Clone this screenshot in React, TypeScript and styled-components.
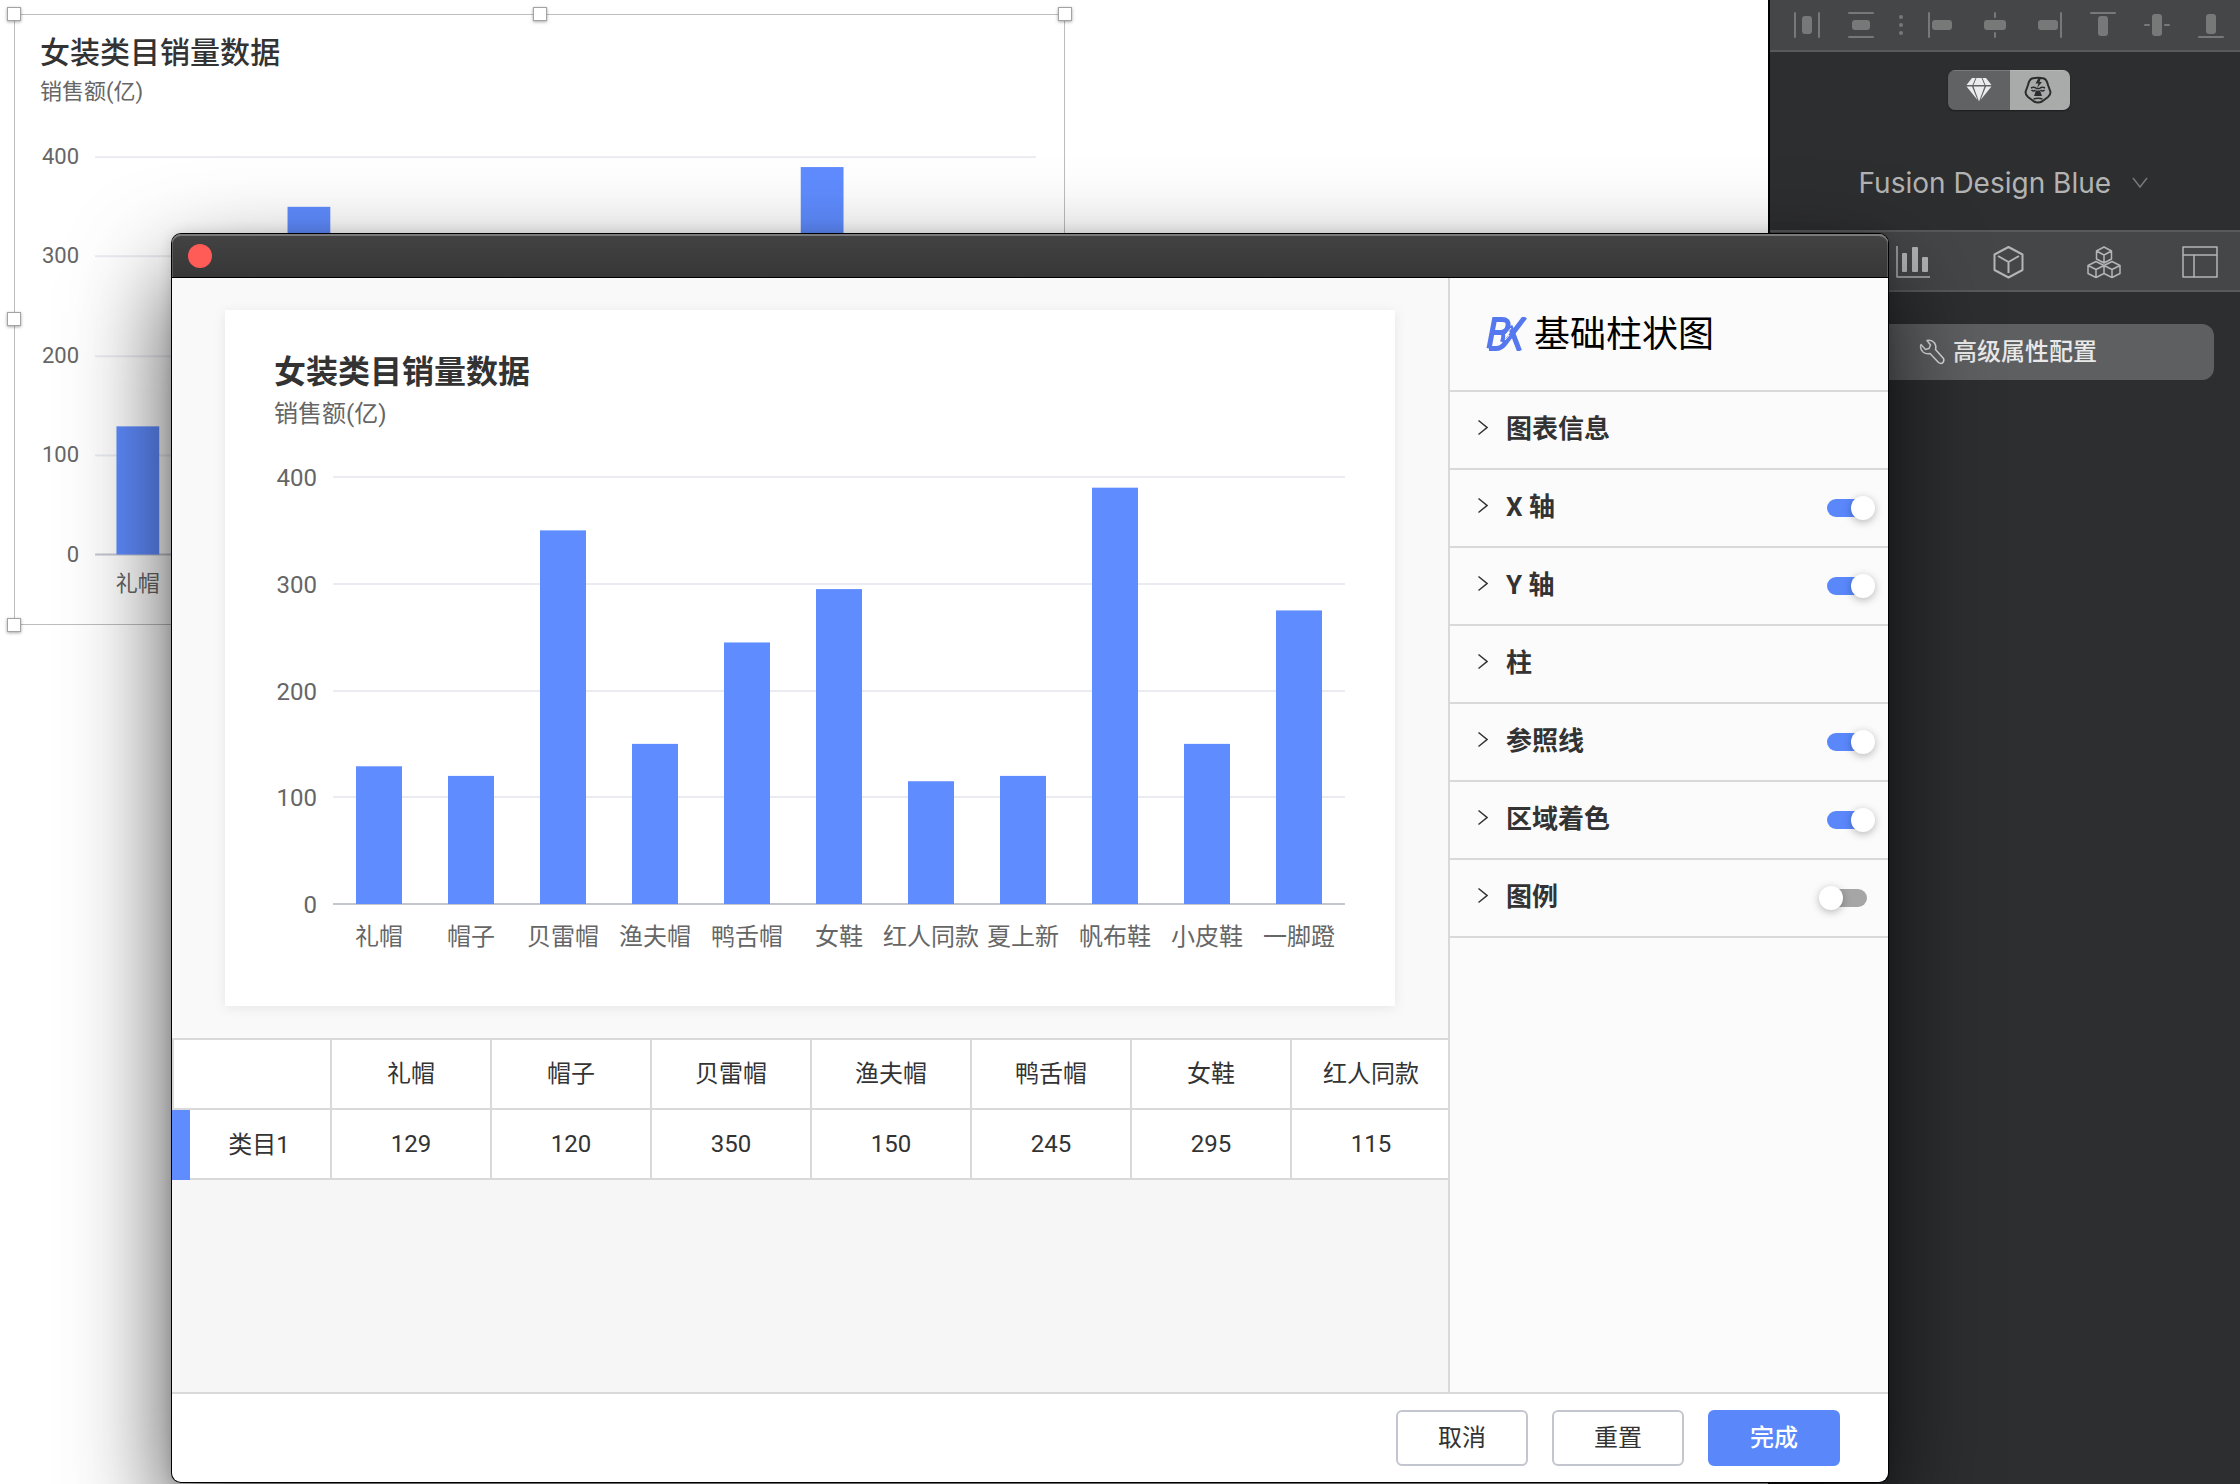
import React from "react";
import styled, { createGlobalStyle } from "styled-components";

const sans = `Roboto, "Noto Sans CJK SC", "Noto Sans", sans-serif`;

const color = {
  brand: "#5a88fb",
  bar: "#5f8cff",
  line: "#d9d9d9",
  text: "#333333",
  muted: "#666666",
  panel: "#2d2e30",
  strip: "#454648",
  stripLine: "#58595b",
};

const GlobalStyle = createGlobalStyle`
  *, *::before, *::after { box-sizing: border-box; }
  body { margin: 0; background: #ffffff; font-family: ${sans}; color: ${color.text}; }
  button, select, input { font: inherit; color: inherit; margin: 0; }
`;

/* ---------- data ---------- */

const items = [
  { name: "礼帽", value: 129 },
  { name: "帽子", value: 120 },
  { name: "贝雷帽", value: 350 },
  { name: "渔夫帽", value: 150 },
  { name: "鸭舌帽", value: 245 },
  { name: "女鞋", value: 295 },
  { name: "红人同款", value: 115 },
  { name: "夏上新", value: 120 },
  { name: "帆布鞋", value: 390 },
  { name: "小皮鞋", value: 150 },
  { name: "一脚蹬", value: 275 },
];

const sections: { title: string; enabled?: boolean }[] = [
  { title: "图表信息" },
  { title: "X 轴", enabled: true },
  { title: "Y 轴", enabled: true },
  { title: "柱" },
  { title: "参照线", enabled: true },
  { title: "区域着色", enabled: true },
  { title: "图例", enabled: false },
];

/* ---------- chart ---------- */

interface ChartLayout {
  width: number;
  height: number;
  titleX: number;
  titleY: number;
  subtitleY: number;
  titleSize: number;
  titleWeight: number;
  labelSize: number;
  left: number;
  right: number;
  top: number;
  base: number;
  tickDrop: number;
  labelDrop: number;
  /* how many category labels are drawn, counted from the left */
  labelCount: number;
}

const canvasChart: ChartLayout = {
  width: 1050,
  height: 610,
  titleX: 26,
  titleY: 49,
  subtitleY: 85,
  titleSize: 30,
  titleWeight: 500,
  labelSize: 22,
  left: 81,
  right: 1021,
  top: 143,
  base: 540,
  tickDrop: 7,
  labelDrop: 36,
  labelCount: 1,
};

const previewChart: ChartLayout = {
  width: 1170,
  height: 696,
  titleX: 49,
  titleY: 73,
  subtitleY: 112,
  titleSize: 32,
  titleWeight: 700,
  labelSize: 24,
  left: 108,
  right: 1120,
  top: 167,
  base: 594,
  tickDrop: 9,
  labelDrop: 41,
  labelCount: items.length,
};

const ChartSvg = styled.svg`
  display: block;
  width: 100%;
  height: auto;
  font-family: ${sans};
`;

function BarChart({ layout: l }: { layout: ChartLayout }) {
  const pitch = (l.right - l.left) / items.length;
  const y = (v: number) => l.base - ((l.base - l.top) * v) / 400;
  return (
    <ChartSvg viewBox={`0 0 ${l.width} ${l.height}`} role="img" aria-label="女装类目销量数据">
      <text x={l.titleX} y={l.titleY} fontSize={l.titleSize} fontWeight={l.titleWeight} fill={color.text}>
        女装类目销量数据
      </text>
      <text x={l.titleX} y={l.subtitleY} fontSize={l.labelSize} fill={color.muted}>
        销售额(亿)
      </text>
      {[400, 300, 200, 100, 0].map((tick) => (
        <g key={tick}>
          <rect
            x={l.left}
            y={Math.round(y(tick)) - 1}
            width={l.right - l.left}
            height={2}
            fill={tick === 0 ? "#c4c6cf" : "#ebecf1"}
          />
          <text
            x={l.left - 16}
            y={y(tick) + l.tickDrop}
            textAnchor="end"
            fontSize={l.labelSize}
            fill={color.muted}
          >
            {tick}
          </text>
        </g>
      ))}
      {items.map((item, i) => (
        <g key={item.name}>
          <rect
            x={l.left + pitch * (i + 0.25)}
            y={y(item.value)}
            width={pitch / 2}
            height={l.base - y(item.value)}
            fill={color.bar}
          />
          {i < l.labelCount && (
            <text
              x={l.left + pitch * (i + 0.5)}
              y={l.base + l.labelDrop}
              textAnchor="middle"
              fontSize={l.labelSize}
              fill={color.muted}
            >
              {item.name}
            </text>
          )}
        </g>
      ))}
    </ChartSvg>
  );
}

/* ---------- workspace ---------- */

const Screen = styled.div`
  position: relative;
  display: grid;
  grid-template-columns: minmax(0, 1fr) 472px;
  height: 100vh;
  overflow: hidden;
`;

const Canvas = styled.main`
  padding: 14px;
  background: #ffffff;
`;

const Artboard = styled.div`
  position: relative;
  width: 1051px;
  outline: 1px solid #bdbdbd;
  outline-offset: -1px;
`;

const Handle = styled.span<{ $x: number; $y: number }>`
  position: absolute;
  left: ${(p) => p.$x}%;
  top: ${(p) => p.$y}%;
  width: 14px;
  height: 14px;
  margin: -7px;
  background: #ffffff;
  border: 1px solid #a3a3a3;
  box-shadow: 0 1px 3px rgba(0, 0, 0, 0.35);
`;

const handles = [
  [0, 0],
  [50, 0],
  [100, 0],
  [0, 50],
  [100, 50],
  [0, 100],
  [50, 100],
  [100, 100],
];

/* ---------- inspector ---------- */

const Inspector = styled.aside`
  display: flex;
  flex-direction: column;
  border-left: 2px solid #000000;
  background: ${color.panel};
`;

const Strip = styled.div`
  display: flex;
  align-items: center;
  background: ${color.strip};
`;

const AlignBar = styled(Strip)`
  height: 52px;
  padding-left: 24px;
  border-bottom: 2px solid ${color.stripLine};
`;

const AlignGroup = styled.div`
  display: flex;
  gap: 28px;
`;

const IconButton = styled.button<{ $size: number }>`
  display: flex;
  align-items: center;
  justify-content: center;
  width: ${(p) => p.$size}px;
  height: ${(p) => p.$size}px;
  padding: 0;
  border: 0;
  background: none;

  svg {
    display: block;
    width: 100%;
    height: 100%;
  }
`;

const Dots = styled.svg`
  width: 4px;
  height: 26px;
  margin: 0 25px;
`;

type Shape = [number, number, number, number];
interface AlignIcon {
  label: string;
  block: Shape;
  lines: Shape[];
}

const distribute: AlignIcon[] = [
  { label: "水平分布", block: [8, 4, 10, 18], lines: [[0, 0, 2, 26], [24, 0, 2, 26]] },
  { label: "垂直分布", block: [4, 8, 18, 10], lines: [[0, 0, 26, 2], [0, 24, 26, 2]] },
];

const align: AlignIcon[] = [
  { label: "左对齐", block: [4, 8, 20, 10], lines: [[0, 0, 2, 26]] },
  { label: "水平居中", block: [2, 8, 22, 10], lines: [[12, 0, 2, 6], [12, 20, 2, 6]] },
  { label: "右对齐", block: [2, 8, 20, 10], lines: [[24, 0, 2, 26]] },
  { label: "顶对齐", block: [8, 4, 10, 20], lines: [[0, 0, 26, 2]] },
  { label: "垂直居中", block: [8, 2, 10, 22], lines: [[0, 12, 6, 2], [20, 12, 6, 2]] },
  { label: "底对齐", block: [8, 2, 10, 20], lines: [[0, 24, 26, 2]] },
];

function AlignButton({ icon }: { icon: AlignIcon }) {
  const [x, y, w, h] = icon.block;
  return (
    <IconButton $size={26} type="button" aria-label={icon.label}>
      <svg viewBox="0 0 26 26" fill="#777978">
        <rect x={x} y={y} width={w} height={h} rx={3} />
        {icon.lines.map(([lx, ly, lw, lh], i) => (
          <rect key={i} x={lx} y={ly} width={lw} height={lh} rx={1} />
        ))}
      </svg>
    </IconButton>
  );
}

const LibraryPanel = styled.div`
  display: flex;
  flex-direction: column;
  align-items: center;
  gap: 53px;
  height: 178px;
  padding-top: 18px;
`;

const Segments = styled.div`
  display: flex;
  height: 40px;
  margin-left: 8px;
  border-radius: 7px;
  overflow: hidden;
  box-shadow: 0 1px 2px rgba(0, 0, 0, 0.4);
`;

const Segment = styled.button<{ $active?: boolean }>`
  display: flex;
  align-items: center;
  justify-content: center;
  width: ${(p) => (p.$active ? 60 : 62)}px;
  padding: ${(p) => (p.$active ? "0 4px 0 0" : "0")};
  border: 0;
  background: ${(p) => (p.$active ? "#a9abaa" : "#616264")};
  box-shadow: inset 0 1px 0 rgba(255, 255, 255, 0.16);

  svg {
    display: block;
    width: 28px;
    height: 28px;
  }
`;

const LibraryField = styled.label`
  display: flex;
  align-items: center;
  gap: 20px;
  margin-right: 4px;

  svg {
    width: 16px;
    height: 12px;
  }
`;

const LibrarySelect = styled.select`
  appearance: none;
  height: 40px;
  padding: 0;
  border: 0;
  background: none;
  color: #b2b3b2;
  font-family: Inter, "Liberation Sans", sans-serif;
  font-size: 28px;
`;

const TabBar = styled(Strip)`
  gap: 60px;
  height: 62px;
  padding: 2px 0 0 28px;
  border-top: 2px solid ${color.stripLine};
  border-bottom: 2px solid ${color.stripLine};
`;

const ConfigButton = styled.button`
  display: flex;
  align-items: center;
  justify-content: center;
  gap: 8px;
  height: 56px;
  margin: 32px 26px 0 28px;
  padding: 0 0 0 4px;
  border: 0;
  border-radius: 12px;
  background: #5e5f61;
  color: #e9e9e9;
  font-size: 24px;
  font-weight: 500;
  line-height: 36px;

  svg {
    width: 26px;
    height: 26px;
  }
`;

const GemIcon = () => (
  <svg viewBox="0 0 28 28" fill="#ececec">
    <path d="M7 2h3.5l-3 7H1.500z" />
    <path d="M11.500 2h5l3 7h-11z" />
    <path d="M17.500 2H21l5.500 7h-6z" />
    <path d="M1.500 10.500h5.500L12.500 24z" />
    <path d="M8.500 10.500h11L14 25.500z" />
    <path d="M21 10.500h5.500L15.500 24z" />
  </svg>
);

const GorillaIcon = () => (
  <svg viewBox="0 0 28 28" fill="none" stroke="#2b2c2d" strokeWidth="2" strokeLinejoin="round">
    <path d="M8 2.500Q14 1 20 2.500Q23 4 24 9L26.500 16Q26.500 19 24 21L18 25.500Q14 27.500 10 25.500L4 21Q1.500 19 1.500 16L4 9Q5 4 8 2.500z" />
    <path d="M14.500 2L11.500 7.500H14.500L13 12L18 6H15.500L17 2z" fill="#2b2c2d" stroke="none" />
    <path d="M7 12Q10 10.500 12.500 12.500H15.500Q18 10.500 21 12" strokeWidth="1.500" />
    <path d="M7.500 14Q9.500 16 11.500 14M16.500 14Q18.500 16 20.500 14" strokeWidth="1.500" />
    <path d="M12 14.500h4l2 5.500h-8z" fill="#2b2c2d" stroke="none" />
    <path d="M9.500 23Q14 21.500 18.500 23" strokeWidth="1.500" />
  </svg>
);

const tabStroke = { fill: "none", stroke: "#b4b5b5", strokeWidth: 2, strokeLinejoin: "round" as const };

const tabs: { label: string; art: React.ReactNode }[] = [
  {
    label: "图标",
    art: <path d="M8 4h20v28H8z" {...tabStroke} />,
  },
  {
    label: "图表",
    art: (
      <g fill="#b4b5b5">
        <path d="M3 2v31h33" {...tabStroke} strokeWidth={1.5} />
        <rect x="8" y="9" width="5" height="19" rx="1" />
        <rect x="18" y="3" width="6" height="25" rx="1" />
        <rect x="28" y="13" width="6" height="15" rx="1" />
      </g>
    ),
  },
  {
    label: "组件",
    art: (
      <path
        d="M18.500 3L32.500 10.500V26L18.500 33.500L4.500 26V10.500zM8 12L18.500 18L29 12M18.500 18V29"
        {...tabStroke}
      />
    ),
  },
  {
    label: "模块",
    art: (
      <path
        d="M18 3L25.500 7V15L18 19L10.500 15V7zM10.500 7L18 11L25.500 7M18 11V19M10 17.500L18 21.500V29.500L10 33.500L2 29.500V21.500zM2 21.500L10 25.500L18 21.500M10 25.500V33.500M26 17.500L34 21.500V29.500L26 33.500L18 29.500V21.500zM18 21.500L26 25.500L34 21.500M26 25.500V33.500"
        {...tabStroke}
        strokeWidth={1.5}
      />
    ),
  },
  {
    label: "模板",
    art: <path d="M1 3h34v30H1zM1 11h34M12 11v22" {...tabStroke} strokeWidth={1.5} />,
  },
];

const WrenchIcon = () => (
  <svg viewBox="0 0 26 26" fill="none" stroke="#dededf" strokeWidth="1.500" strokeLinejoin="round">
    <path d="M8 1.500Q12.500 0.500 15.500 4Q17.500 7 16.500 10.500L24.500 19.500Q25.500 22 23.500 24Q21.500 25 19.500 23.500L11 14.500Q7 15.500 4 13Q0.500 9.500 2 5.500L6.500 10.500L10 9.500L11.500 6z" />
  </svg>
);

/* ---------- dialog ---------- */

const Dialog = styled.section`
  position: absolute;
  top: 234px;
  right: 352px;
  bottom: 2px;
  left: 172px;
  display: flex;
  flex-direction: column;
  border-radius: 9px;
  background: #ffffff;
  box-shadow: 0 0 0 1px #000000, 0 44px 100px rgba(0, 0, 0, 0.72), 0 0 14px rgba(0, 0, 0, 0.16);
`;

const TitleBar = styled.header`
  display: flex;
  align-items: center;
  flex: none;
  height: 44px;
  padding-left: 16px;
  border-bottom: 1px solid #000000;
  border-radius: 9px 9px 0 0;
  background: linear-gradient(#434343, #373737);
  box-shadow: inset 0 2px 0 #7a7a7a, inset 1px 0 0 #5c5c5c, inset -1px 0 0 #5c5c5c;
`;

const CloseButton = styled.button`
  width: 24px;
  height: 24px;
  padding: 0;
  border: 0;
  border-radius: 50%;
  background: #ff5c57;
`;

const DialogBody = styled.div`
  display: grid;
  grid-template-columns: minmax(0, 1fr) 440px;
  flex: 1;
  min-height: 0;
`;

const Workbench = styled.div`
  min-width: 0;
  overflow: hidden;
  background: #f6f6f6;
`;

const PreviewArea = styled.div`
  padding: 32px 53px;
  background: #f9f9f9;
`;

const PreviewCard = styled.div`
  background: #ffffff;
  box-shadow: 0 2px 12px rgba(0, 0, 0, 0.08);
`;

const DataTable = styled.table`
  width: 1280px;
  table-layout: fixed;
  border-spacing: 0;
  border-top: 2px solid ${color.line};
  background: #ffffff;
  font-size: 24px;
  line-height: 36px;
`;

const cell = `
  height: 70px;
  padding: 0;
  border-right: 2px solid ${color.line};
  border-bottom: 2px solid ${color.line};
  font-weight: 400;
  text-align: center;
`;

const HeadCell = styled.th`
  ${cell}
`;

const CornerCell = styled.td`
  ${cell}
  border-left: 2px solid ${color.line};
`;

const SeriesCell = styled.th`
  ${cell}
  padding-right: 2px;
  border-left: 18px solid ${color.bar};
  border-bottom: 0;
  box-shadow: inset 0 -2px 0 ${color.line};
`;

const ValueCell = styled.td`
  ${cell}
`;

const Settings = styled.div`
  border-left: 2px solid ${color.line};
  background: #fbfbfb;
`;

const ChartKind = styled.div`
  display: flex;
  align-items: center;
  gap: 6px;
  height: 114px;
  padding-left: 36px;
  border-bottom: 2px solid ${color.line};

  svg {
    width: 42px;
    height: 34px;
  }
`;

const KindName = styled.h1`
  margin: 0;
  padding-top: 2px;
  color: #000000;
  font-size: 36px;
  font-weight: 400;
  line-height: 54px;
`;

const SectionRow = styled.div`
  display: flex;
  align-items: center;
  justify-content: space-between;
  height: 78px;
  padding: 0 21px 0 28px;
  border-bottom: 2px solid ${color.line};
`;

const SectionToggle = styled.button`
  display: flex;
  align-items: center;
  gap: 18px;
  padding: 0 0 2px;
  border: 0;
  background: none;
  font-size: 26px;
  font-weight: 700;
  line-height: 40px;

  svg {
    width: 10px;
    height: 20px;
  }
`;

const Switch = styled.input`
  appearance: none;
  position: relative;
  width: 40px;
  height: 18px;
  border-radius: 9px;
  background: #a6a6a6;

  &::before {
    content: "";
    position: absolute;
    top: -3px;
    left: -8px;
    width: 24px;
    height: 24px;
    border-radius: 50%;
    background: #ffffff;
    box-shadow: 0 2px 8px rgba(0, 0, 0, 0.28);
  }

  &:checked {
    background: ${color.brand};
  }

  &:checked::before {
    left: 24px;
  }
`;

const Footer = styled.footer`
  display: flex;
  justify-content: flex-end;
  gap: 24px;
  flex: none;
  padding: 16px 48px;
  border-top: 2px solid ${color.line};
`;

const ActionButton = styled.button<{ $primary?: boolean }>`
  width: 132px;
  height: 56px;
  padding: 0;
  border: 2px solid ${(p) => (p.$primary ? color.brand : "#c4c6cf")};
  border-radius: 6px;
  background: ${(p) => (p.$primary ? color.brand : "#ffffff")};
  color: ${(p) => (p.$primary ? "#ffffff" : color.text)};
  font-size: 24px;
  font-weight: ${(p) => (p.$primary ? 500 : 400)};
  line-height: 36px;
`;

const KindLogo = () => (
  <svg viewBox="0 0 42 34" fill="none" stroke="#5678ee" strokeWidth="5" aria-hidden="true">
    <path d="M3 31.500L8.500 2.500H16Q23 2.500 22 9Q21 15.500 15 15.500H6" />
    <path d="M3 31.500H10Q15 31.500 18.500 27L39 0" />
    <path d="M15 15.500Q19 17 16 25" strokeWidth="4" />
    <path d="M24 9L33.500 34" />
    <path d="M25 11L20 17.500L23 18.500L19 23" stroke="#fbfbfb" strokeWidth="1" />
  </svg>
);

export default function App() {
  return (
    <>
      <GlobalStyle />
      <Screen>
        <Canvas>
          <Artboard>
            <BarChart layout={canvasChart} />
            {handles.map(([x, y]) => (
              <Handle key={`${x}-${y}`} $x={x} $y={y} />
            ))}
          </Artboard>
        </Canvas>

        <Inspector>
          <AlignBar>
            <AlignGroup>
              {distribute.map((icon) => (
                <AlignButton key={icon.label} icon={icon} />
              ))}
            </AlignGroup>
            <Dots viewBox="0 0 4 26" fill="#777978">
              <circle cx="2" cy="5" r="2" />
              <circle cx="2" cy="13" r="2" />
              <circle cx="2" cy="21" r="2" />
            </Dots>
            <AlignGroup>
              {align.map((icon) => (
                <AlignButton key={icon.label} icon={icon} />
              ))}
            </AlignGroup>
          </AlignBar>

          <LibraryPanel>
            <Segments>
              <Segment type="button" aria-label="Sketch">
                <GemIcon />
              </Segment>
              <Segment type="button" aria-label="Kitchen" $active>
                <GorillaIcon />
              </Segment>
            </Segments>
            <LibraryField>
              <LibrarySelect aria-label="设计系统" defaultValue="blue">
                <option value="blue">Fusion Design Blue</option>
              </LibrarySelect>
              <svg viewBox="0 0 16 12" fill="none" stroke="#77787a" strokeWidth="1.500">
                <path d="M1 1l7 9 7-9" />
              </svg>
            </LibraryField>
          </LibraryPanel>

          <TabBar>
            {tabs.map((tab) => (
              <IconButton key={tab.label} $size={36} type="button" aria-label={tab.label}>
                <svg viewBox="0 0 36 36">{tab.art}</svg>
              </IconButton>
            ))}
          </TabBar>

          <ConfigButton type="button">
            <WrenchIcon />
            高级属性配置
          </ConfigButton>
        </Inspector>

        <Dialog role="dialog" aria-label="基础柱状图">
          <TitleBar>
            <CloseButton type="button" aria-label="关闭" />
          </TitleBar>
          <DialogBody>
            <Workbench>
              <PreviewArea>
                <PreviewCard>
                  <BarChart layout={previewChart} />
                </PreviewCard>
              </PreviewArea>
              <DataTable>
                <thead>
                  <tr>
                    <CornerCell />
                    {items.slice(0, 7).map((item) => (
                      <HeadCell key={item.name} scope="col">
                        {item.name}
                      </HeadCell>
                    ))}
                  </tr>
                </thead>
                <tbody>
                  <tr>
                    <SeriesCell scope="row">类目1</SeriesCell>
                    {items.slice(0, 7).map((item) => (
                      <ValueCell key={item.name}>{item.value}</ValueCell>
                    ))}
                  </tr>
                </tbody>
              </DataTable>
            </Workbench>

            <Settings>
              <ChartKind>
                <KindLogo />
                <KindName>基础柱状图</KindName>
              </ChartKind>
              {sections.map((section) => (
                <SectionRow key={section.title}>
                  <SectionToggle type="button" aria-expanded={false}>
                    <svg viewBox="0 0 10 20" fill="none" stroke="#333333" strokeWidth="1.500">
                      <path d="M0.500 1.500L9 8.500L0.500 15.500" />
                    </svg>
                    {section.title}
                  </SectionToggle>
                  {section.enabled !== undefined && (
                    <Switch type="checkbox" aria-label={section.title} defaultChecked={section.enabled} />
                  )}
                </SectionRow>
              ))}
            </Settings>
          </DialogBody>
          <Footer>
            <ActionButton type="button">取消</ActionButton>
            <ActionButton type="button">重置</ActionButton>
            <ActionButton type="button" $primary>
              完成
            </ActionButton>
          </Footer>
        </Dialog>
      </Screen>
    </>
  );
}
